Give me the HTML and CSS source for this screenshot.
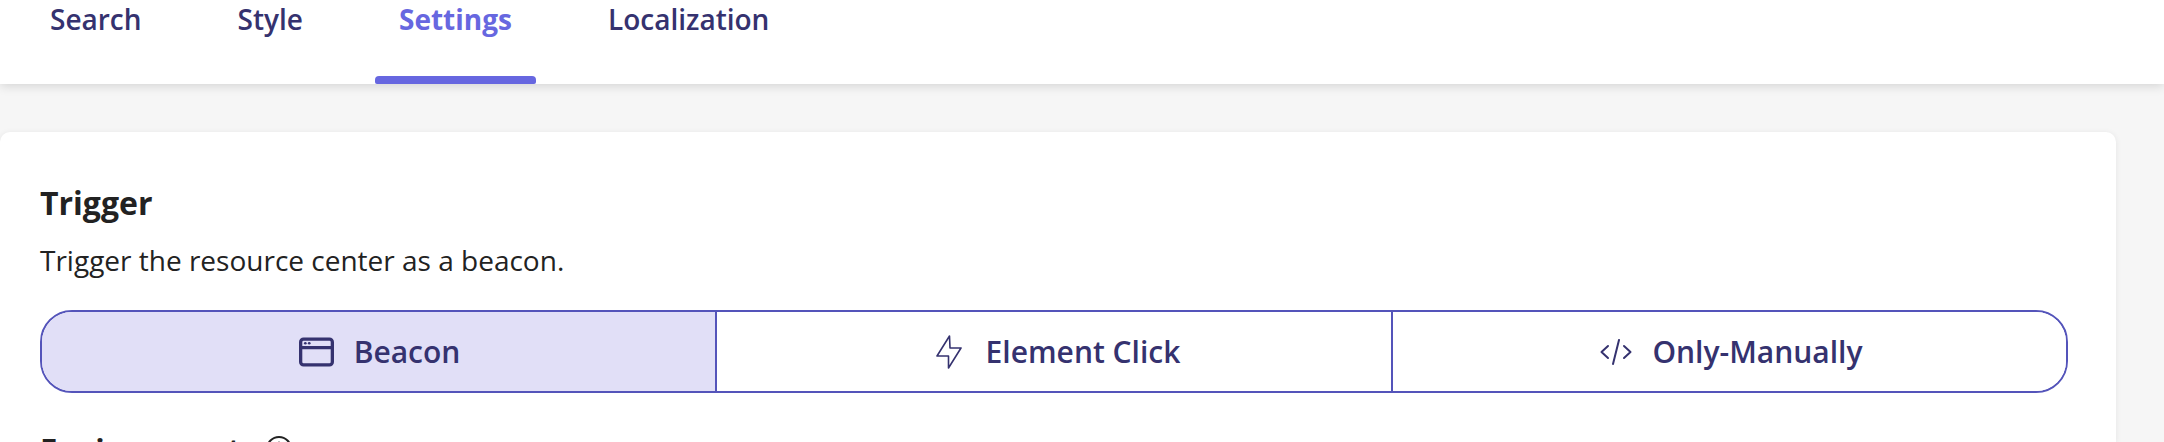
FILE: index.html
```html
<!DOCTYPE html>
<html lang="en">
<head>
  <meta charset="UTF-8" />
  <title>Resource Center Settings</title>
  <link rel="stylesheet" href="styles.css">
</head>
<body>

<!-- Tabs -->
<nav class="tabs">
  <a class="tab">Search</a>
  <a class="tab">Style</a>
  <a class="tab active">Settings</a>
  <a class="tab">Localization</a>
</nav>

<main class="content">
  <section class="card">
    <h2 class="card-title">Trigger</h2>
    <p class="card-text">Trigger the resource center as a beacon.</p>

    <div class="segments">
      <button class="segment selected">
        <svg class="icon-beacon" width="35" height="30" viewBox="0 0 36 30" fill="none" stroke="currentColor" stroke-width="3.4">
          <rect x="1.7" y="1.7" width="32.6" height="26.6" rx="3"/>
          <path d="M1.7 10.5h32.6"/>
          <circle cx="6.5" cy="6" r="1.4" fill="currentColor" stroke="none"/>
          <circle cx="10.5" cy="6" r="1.4" fill="currentColor" stroke="none"/>
        </svg>
        Beacon
      </button>
      <button class="segment">
        <svg class="icon-click" width="26" height="34" viewBox="0 0 26 34" fill="none" stroke="currentColor" stroke-width="1.6" stroke-linejoin="round">
          <path d="M13.5 1 1 21h11.5L12.5 33 25 13H14z"/>
        </svg>
        Element Click
      </button>
      <button class="segment">
        <svg class="icon-code" width="32" height="26" viewBox="0 0 32 26" fill="none" stroke="currentColor" stroke-width="2" stroke-linecap="round" stroke-linejoin="round">
          <path d="M8 7 1.5 13 8 19"/>
          <path d="M24 7l6.5 6-6.5 6"/>
          <path d="M19 1l-6 24"/>
        </svg>
        Only-Manually
      </button>
    </div>

    <h2 class="card-title env-title">
      Environment
      <svg width="26" height="26" viewBox="0 0 26 26" fill="none" stroke="currentColor" stroke-width="2">
        <circle cx="13" cy="13" r="12"/>
        <circle cx="13" cy="7" r="1.4" fill="currentColor" stroke="none"/>
        <path d="M13 11v8"/>
      </svg>
    </h2>
  </section>
</main>

</body>
</html>
```

FILE: styles.css
```css
html, body {
  height: 442px;
  overflow: hidden;
}

body {
  margin: 0;
  font-family: "Open Sans", "Noto Sans", sans-serif;
  background: #f6f6f6;
  color: #222;
}

/* Tabs */
.tabs {
  display: flex;
  gap: 48px;
  height: 84px;
  padding-left: 26px;
  background: #fff;
  box-shadow: 0 2px 10px rgba(0, 0, 0, 0.14);
}

.tab {
  font-size: 28px;
  font-weight: 600;
  line-height: 38px;
  color: #35326f;
  padding: 0 24px;
  position: relative;
}

.tab.active {
  color: #6767e0;
  font-weight: 700;
}

.tab.active::after {
  content: "";
  position: absolute;
  left: 0;
  right: 0;
  bottom: 0;
  height: 8px;
  background: #6767e0;
  border-radius: 4px 4px 2px 2px;
}

/* Card */
.content {
  box-sizing: border-box;
  height: 358px;
  padding: 48px 48px 0 0;
  overflow: hidden;
}

.card {
  box-sizing: border-box;
  height: 100%;
  overflow: hidden;
  background: #fff;
  border-radius: 10px 10px 0 0;
  padding: 50px 48px 0 40px;
  box-shadow: 0 1px 6px rgba(0, 0, 0, 0.08);
}

.card-title {
  margin: 0;
  font-size: 32px;
  font-weight: 700;
  line-height: 42px;
  color: #222;
}

.card-text {
  margin: 15px 0 0;
  font-size: 28px;
  line-height: 42px;
  color: #222;
}

/* Segmented control */
.segments {
  display: grid;
  grid-template-columns: 673px 676px 1fr;
  height: 83px;
  margin-top: 29px;
  border: 2px solid #5454ba;
  border-radius: 32px;
  box-sizing: border-box;
  overflow: hidden;
}

.segment {
  display: flex;
  align-items: center;
  justify-content: center;
  gap: 20px;
  border: none;
  border-left: 2px solid #5454ba;
  background: #fff;
  color: #35326f;
  font-family: inherit;
  font-size: 30px;
  font-weight: 600;
  padding: 0;
}

.segment:first-child {
  border-left: none;
}

.segment.selected {
  background: #e1dff7;
}

.icon-beacon {
  margin-left: 2px;
}

.icon-click {
  margin-left: 8px;
  margin-right: 4px;
}

.icon-code {
  margin-left: 4px;
}

.env-title {
  margin-top: 35px;
  display: flex;
  align-items: center;
  gap: 25px;
  font-size: 31px;
}
```
